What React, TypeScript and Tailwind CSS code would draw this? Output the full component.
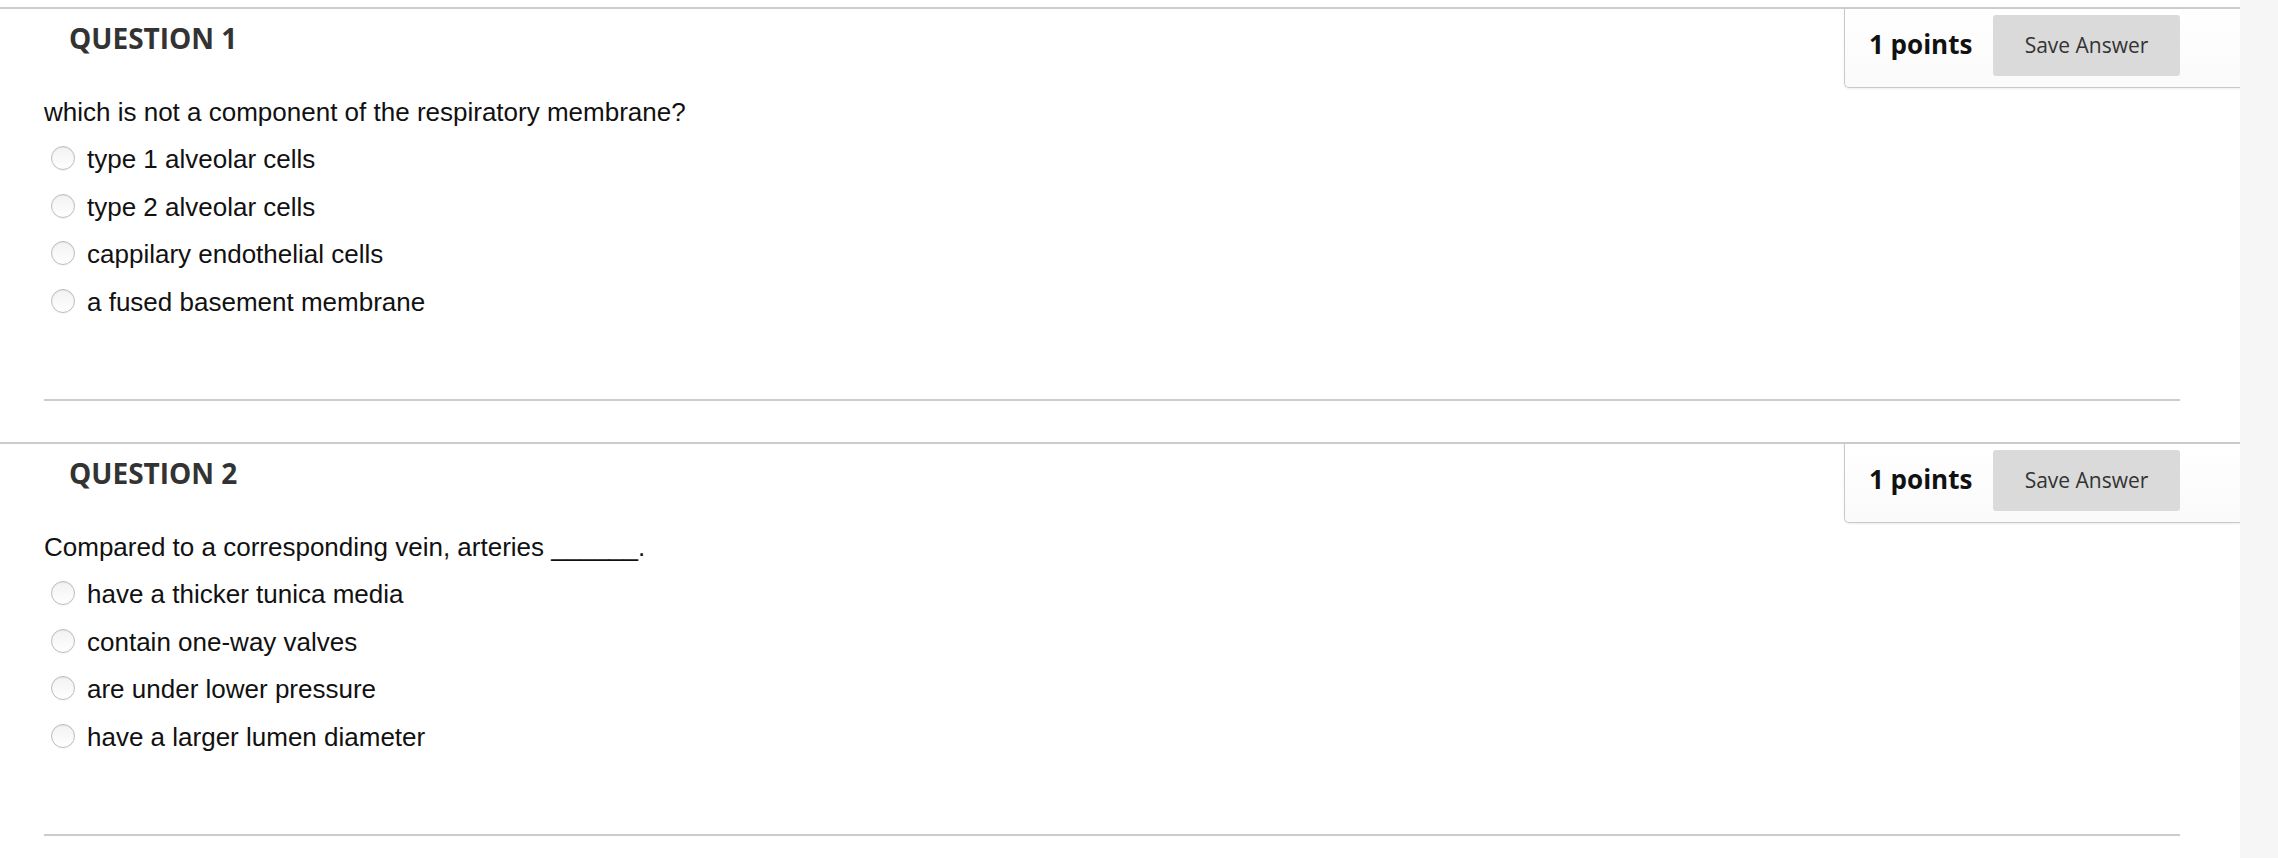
import React from "react";

type Question = {
  number: number;
  prompt: string;
  options: string[];
};

const questions: Question[] = [
  {
    number: 1,
    prompt: "which is not a component of the respiratory membrane?",
    options: [
      "type 1 alveolar cells",
      "type 2 alveolar cells",
      "cappilary endothelial cells",
      "a fused basement membrane",
    ],
  },
  {
    number: 2,
    prompt: "Compared to a corresponding vein, arteries ______.",
    options: [
      "have a thicker tunica media",
      "contain one-way valves",
      "are under lower pressure",
      "have a larger lumen diameter",
    ],
  },
];

function Radio() {
  return (
    <span className="ml-[7px] mr-[12px] -mt-[3px] inline-block h-[24px] w-[24px] shrink-0 rounded-full border border-[#bdbdbd] bg-gradient-to-b from-[#f2f2f2] to-white shadow-[inset_0_1px_1px_rgba(0,0,0,0.06),0_1px_0_rgba(0,0,0,0.04)]" />
  );
}

function QuestionBlock({ number, prompt, options }: Question) {
  return (
    <section className="mb-[41px] border-t-2 border-[#cccccc]">
      <div className="flex h-[79px] items-start justify-between">
        <h2 className="pl-[69px] pt-[10px] font-['Open_Sans',sans-serif] text-[28px] font-bold leading-[38px] text-[#333333]">
          QUESTION {number}
        </h2>
        <div className="flex h-[79px] w-[396px] items-start justify-between rounded-bl-[5px] border-b border-l border-[#c9c9c9] bg-gradient-to-b from-white to-[#fafafa] pl-[24px] pr-[60px] pt-[6px] shadow-[0_1px_2px_rgba(0,0,0,0.08)]">
          <span className="mt-[9px] font-['Open_Sans',sans-serif] text-[26px] font-bold leading-[40px] text-[#111111]">
            1 points
          </span>
          <button className="h-[61px] w-[187px] rounded-[3px] bg-[#dadada] font-['Open_Sans',sans-serif] text-[21px] text-[#333333]">
            Save Answer
          </button>
        </div>
      </div>

      <div className="pl-[44px] pr-[60px] font-['Liberation_Sans',Arial,sans-serif] text-[26px] text-[#111111]">
        <p className="leading-[48px]">{prompt}</p>
        <ul>
          {options.map((opt) => (
            <li key={opt} className="flex h-[47.5px] items-center leading-[47.5px]">
              <Radio />
              <span>{opt}</span>
            </li>
          ))}
        </ul>
        <div className="mt-[73px] border-t-2 border-[#cccccc]" />
      </div>
    </section>
  );
}

export default function App() {
  return (
    <div className="flex h-[858px] overflow-hidden bg-white">
      <main className="w-[2240px] shrink-0 pt-[7px]">
        {questions.map((q) => (
          <QuestionBlock key={q.number} {...q} />
        ))}
      </main>
      <div className="flex-1 bg-[#f6f6f6]" />
    </div>
  );
}
